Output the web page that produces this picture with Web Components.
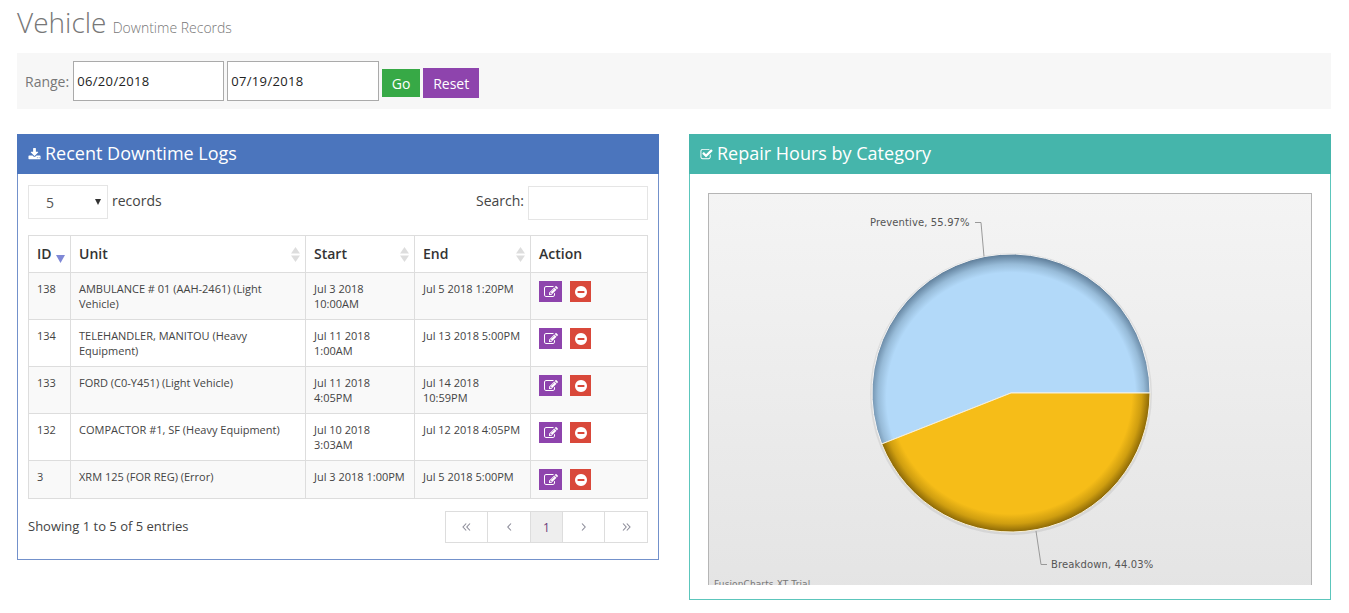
<!DOCTYPE html>
<html>
<head>
<meta charset="utf-8">
<title>Vehicle Downtime Records</title>
<style>
  body { margin: 0; background: #fff; font-family: "Open Sans", "Liberation Sans", sans-serif; color: #555; }
</style>
</head>
<body>
<vehicle-page></vehicle-page>

<script>
'use strict';

const ICONS = {
  download: 'M1344 1344q0-26-19-45t-45-19-45 19-19 45 19 45 45 19 45-19 19-45zm256 0q0-26-19-45t-45-19-45 19-19 45 19 45 45 19 45-19 19-45zm128-224v320q0 40-28 68t-68 28h-1472q-40 0-68-28t-28-68v-320q0-40 28-68t68-28h465l135 136q58 56 136 56t136-56l136-136h464q40 0 68 28t28 68zm-325-569q17 41-14 70l-448 448q-18 19-45 19t-45-19l-448-448q-31-29-14-70 17-39 59-39h256v-448q0-26 19-45t45-19h256q26 0 45 19t19 45v448h256q42 0 59 39z',
  check: 'M1472 930v318q0 119-84.5 203.5t-203.5 84.5h-832q-119 0-203.5-84.5t-84.5-203.5v-832q0-119 84.5-203.5t203.5-84.5h832q63 0 117 25 15 7 18 23 3 17-9 29l-49 49q-10 10-23 10-3 0-9-2-23-6-45-6h-832q-66 0-113 47t-47 113v832q0 66 47 113t113 47h832q66 0 113-47t47-113v-254q0-13 9-22l64-64q10-10 23-10 6 0 12 3 20 8 20 29zm231-489l-814 814q-24 24-57 24t-57-24l-430-430q-24-24-24-57t24-57l110-110q24-24 57-24t57 24l263 263 647-647q24-24 57-24t57 24l110 110q24 24 24 57t-24 57z',
  edit: 'M888 1184l116-116-152-152-116 116v56h96v96h56zm440-720q-16-16-33 1l-350 350q-17 17-1 33t33-1l350-350q17-17 1-33zm80 594v190q0 119-84.5 203.5t-203.5 84.5h-832q-119 0-203.5-84.5t-84.5-203.5v-832q0-119 84.5-203.5t203.5-84.5h832q63 0 117 25 15 7 18 23 3 17-9 29l-49 49q-14 14-32 8-23-6-45-6h-832q-66 0-113 47t-47 113v832q0 66 47 113t113 47h832q66 0 113-47t47-113v-126q0-13 9-22l64-64q15-15 35-7t20 29zm-96-738l288 288-672 672h-288v-288zm444 132l-92 92-288-288 92-92q28-28 68-28t68 28l152 152q28 28 28 68t-28 68z',
  minus: 'M1344 960v-128q0-26-19-45t-45-19h-768q-26 0-45 19t-19 45v128q0 26 19 45t45 19h768q26 0 45-19t19-45zm320-64q0 209-103 385.5t-279.5 279.5-385.5 103-385.5-103-279.5-279.5-103-385.5 103-385.5 279.5-279.5 385.5-103 385.5 103 279.5 279.5 103 385.5z',
};

function icon(name, size) {
  return `<svg width="${size}" height="${size}" viewBox="0 0 1792 1792" fill="currentColor" style="display:block"><path d="${ICONS[name]}"/></svg>`;
}

function chevrons(points) {
  return `<svg width="9" height="8" viewBox="0 0 9 8" fill="none" stroke="#8b8b98" stroke-width="1.1"><path d="${points}"/></svg>`;
}

class PageTitle extends HTMLElement {
  constructor() {
    super();
    this.attachShadow({ mode: 'open' });
    this.shadowRoot.innerHTML = `
      <style>
        :host { display: block; padding: 0 17px; height: 53px; }
        h1 { margin: 0; padding-top: 3px; font-size: 28px; line-height: 38px; font-weight: 300; color: #777; }
        small { font-size: 14px; font-weight: 300; color: #777; margin-left: -1px; }
      </style>
      <h1><slot></slot> <small><slot name="sub"></slot></small></h1>
    `;
  }
}

class RangeBar extends HTMLElement {
  constructor() {
    super();
    this.attachShadow({ mode: 'open' });
    this.shadowRoot.innerHTML = `
      <style>
        :host { display: flex; align-items: center; height: 56px; margin: 0 18px 0 17px; padding-left: 8px; background: #f7f7f7; font-size: 14px; color: #777; }
        input { box-sizing: border-box; width: 151px; height: 40px; border: 1px solid #aaa; padding: 0 3px; font: 13px "Open Sans", sans-serif; letter-spacing: 0.35px; color: #222; background: #fff; outline: 0; }
        .label { margin-right: 4px; }
        .end { width: 152px; margin-left: 3px; }
        button { border: 0; padding: 0; color: #fff; font: 14px "Open Sans", sans-serif; }
        .go { width: 38px; height: 28px; margin: 4px 0 0 3px; background: #37a946; }
        .reset { width: 56px; height: 30px; margin: 4px 0 0 3px; background: #8e44ad; }
      </style>
      <span class="label">Range:</span>
      <input value="06/20/2018">
      <input class="end" value="07/19/2018">
      <button class="go">Go</button>
      <button class="reset">Reset</button>
    `;
  }
}

class InfoPanel extends HTMLElement {
  constructor() {
    super();
    this.attachShadow({ mode: 'open' });
    const color = this.getAttribute('color');
    const border = this.getAttribute('border');
    this.shadowRoot.innerHTML = `
      <style>
        :host { display: block; box-sizing: border-box; border: 1px solid ${border}; border-top: 0; align-self: start; }
        header { display: flex; align-items: center; height: 40px; margin: 0 -1px; padding: 0 0 2px 11px; box-sizing: border-box; background: ${color}; color: #fff; font-size: 18px; }
        .ic { margin: 2px 4px 0 0; }
      </style>
      <header><span class="ic">${icon(this.getAttribute('icon'), 13)}</span>${this.getAttribute('heading')}</header>
      <slot></slot>
    `;
  }
}

const ROWS = [
  ['138', 'AMBULANCE # 01 (AAH-2461) (Light Vehicle)', 'Jul 3 2018 10:00AM', 'Jul 5 2018 1:20PM'],
  ['134', 'TELEHANDLER, MANITOU (Heavy Equipment)', 'Jul 11 2018 1:00AM', 'Jul 13 2018 5:00PM'],
  ['133', 'FORD (C0-Y451) (Light Vehicle)', 'Jul 11 2018 4:05PM', 'Jul 14 2018 10:59PM'],
  ['132', 'COMPACTOR #1, SF (Heavy Equipment)', 'Jul 10 2018 3:03AM', 'Jul 12 2018 4:05PM'],
  ['3', 'XRM 125 (FOR REG) (Error)', 'Jul 3 2018 1:00PM', 'Jul 5 2018 5:00PM'],
];

const SORT_BOTH = `<svg class="sort" width="9" height="15" viewBox="0 0 9 15"><path d="M4.5 0L9 6.5H0z" fill="#ddd"/><path d="M0 8.5h9L4.5 15z" fill="#ddd"/></svg>`;
const SORT_DESC = `<svg class="sort-id" width="9" height="8" viewBox="0 0 9 8"><path d="M0 0h9L4.5 8z" fill="#7f88d6"/></svg>`;

class RecordsTable extends HTMLElement {
  constructor() {
    super();
    this.attachShadow({ mode: 'open' });
    const body = ROWS.map((row) => `
      <tr>
        <td>${row[0]}</td><td>${row[1]}</td><td>${row[2]}</td><td>${row[3]}</td>
        <td><div class="actions">
          <span class="btn edit">${icon('edit', 14)}</span>
          <span class="btn del">${icon('minus', 14)}</span>
        </div></td>
      </tr>`).join('');
    this.shadowRoot.innerHTML = `
      <style>
        :host { display: block; padding: 11px 10px 16px; font-size: 13px; color: #444; }
        .top { display: flex; justify-content: space-between; height: 50px; font-size: 14px; }
        .len { display: flex; align-items: flex-start; }
        .select { box-sizing: border-box; display: flex; align-items: center; justify-content: space-between; width: 80px; height: 34px; padding: 0 6px 0 17px; border: 1px solid #e5e5e5; font-size: 14px; color: #555; }
        .len span.txt { margin: 6px 0 0 4px; }
        .search { display: flex; align-items: flex-start; }
        .search span { margin: 6px 4px 0 0; }
        .search input { box-sizing: border-box; width: 120px; height: 34px; margin-top: 1px; border: 1px solid #e5e5e5; outline: 0; }
        table { border-collapse: collapse; table-layout: fixed; width: 620px; }
        th, td { border: 1px solid #ddd; vertical-align: top; text-align: left; padding: 8px; }
        th { position: relative; height: 20px; font-size: 14px; line-height: 20px; font-weight: 600; color: #333; padding-bottom: 8px; }
        td { font-size: 11px; line-height: 15px; color: #444; }
        tbody tr:nth-child(odd) td { background: #f9f9f9; }
        .sort { position: absolute; right: 5px; top: 11px; }
        .sort-id { position: absolute; left: 27px; top: 19px; }
        .actions { display: flex; gap: 8px; }
        .btn { display: flex; align-items: center; justify-content: center; height: 21px; color: #fff; }
        .edit { width: 23px; background: #8e44ad; }
        .del { width: 21px; background: #d9483a; }
        .foot { display: flex; justify-content: space-between; align-items: flex-start; margin-top: 12px; }
        .foot .info { margin-top: 6px; }
        .pager { display: flex; border: 1px solid #ddd; height: 30px; }
        .pager span { display: flex; align-items: center; justify-content: center; box-sizing: border-box; height: 30px; border-left: 1px solid #ddd; font-size: 12px; color: #777; }
        .pager span:first-child { border-left: 0; }
        .pager .cur { background: #eee; color: #6b3b7a; }
      </style>
      <div class="top">
        <div class="len">
          <div class="select">5 <svg width="6" height="6" viewBox="0 0 6 6"><path d="M0 0h6L3 6z" fill="#333"/></svg></div>
          <span class="txt">records</span>
        </div>
        <div class="search"><span>Search:</span><input></div>
      </div>
      <table>
        <colgroup><col style="width:42px"><col style="width:235px"><col style="width:109px"><col style="width:116px"><col></colgroup>
        <thead><tr>
          <th>ID${SORT_DESC}</th><th>Unit${SORT_BOTH}</th><th>Start${SORT_BOTH}</th><th>End${SORT_BOTH}</th><th>Action</th>
        </tr></thead>
        <tbody>${body}</tbody>
      </table>
      <div class="foot">
        <span class="info">Showing 1 to 5 of 5 entries</span>
        <div class="pager">
          <span style="width:41px">${chevrons('M4.2 .5L1 4l3.2 3.5M8 .5L4.8 4 8 7.5')}</span>
          <span style="width:43px">${chevrons('M6 .5L2.8 4 6 7.5')}</span>
          <span class="cur" style="width:32px">1</span>
          <span style="width:42px">${chevrons('M3 .5L6.2 4 3 7.5')}</span>
          <span style="width:43px">${chevrons('M1 .5L4.2 4 1 7.5M4.8 .5L8 4 4.8 7.5')}</span>
        </div>
      </div>
    `;
  }
}

class PieChart extends HTMLElement {
  constructor() {
    super();
    this.attachShadow({ mode: 'open' });
    // chart-local coordinates: the box starts at 708,193 on the page
    const cx = 303, cy = 200, r = 139;
    const ex = cx - 129.3, ey = cy + 51;
    const blue = `M${cx} ${cy}L${cx + r} ${cy}A${r} ${r} 0 1 0 ${ex} ${ey}Z`;
    const gold = `M${cx} ${cy}L${cx + r} ${cy}A${r} ${r} 0 0 1 ${ex} ${ey}Z`;
    this.shadowRoot.innerHTML = `
      <style>
        :host { display: block; margin: 19px 18px 14px; height: 392px; overflow: hidden; }
        svg { display: block; }
        text { font-family: "DejaVu Sans", Verdana, sans-serif; font-size: 10px; letter-spacing: 0.12px; fill: #555; }
      </style>
      <svg width="604" height="392" viewBox="0 0 604 392">
        <defs>
          <linearGradient id="bg" x1="0" y1="0" x2="0" y2="1">
            <stop offset="0" stop-color="#f4f4f4"/><stop offset="1" stop-color="#e4e4e4"/>
          </linearGradient>
          <radialGradient id="fb" gradientUnits="userSpaceOnUse" cx="${cx}" cy="${cy + 4}" r="${r + 4}">
            <stop offset="0.87" stop-color="#b2d9f9"/><stop offset="0.93" stop-color="#97bbd8"/><stop offset="0.98" stop-color="#6c8ca8"/><stop offset="1" stop-color="#5b7a96"/>
          </radialGradient>
          <radialGradient id="fg" gradientUnits="userSpaceOnUse" cx="${cx}" cy="${cy}" r="${r}">
            <stop offset="0.87" stop-color="#f6bd18"/><stop offset="0.94" stop-color="#cf9e10"/><stop offset="1" stop-color="#8a6706"/>
          </radialGradient>
        </defs>
        <rect x="0.5" y="0.5" width="603" height="400" fill="url(#bg)" stroke="#b5b5b5"/>
        <circle cx="${cx}" cy="${cy + 1}" r="${r + 2}" fill="#000" opacity="0.07"/>
        <path d="${blue}" fill="url(#fb)" stroke="#f4f4f4" stroke-width="1"/>
        <path d="${gold}" fill="url(#fg)" stroke="#f8f0d8" stroke-width="1"/>
        <path d="M267 29.5h6l3 34" fill="none" stroke="#999"/>
        <path d="M328 338l5 33.5h6" fill="none" stroke="#999"/>
        <text x="162" y="33">Preventive, 55.97%</text>
        <text x="343" y="375">Breakdown, 44.03%</text>
        <text x="6" y="394" style="font-size:9px;fill:#777">FusionCharts XT Trial</text>
      </svg>
    `;
  }
}

class VehiclePage extends HTMLElement {
  constructor() {
    super();
    this.attachShadow({ mode: 'open' });
    this.shadowRoot.innerHTML = `
      <style>
        :host { display: block; }
        .panels { display: grid; grid-template-columns: 642px 642px; gap: 30px; margin: 25px 17px 0; }
      </style>
      <page-title>Vehicle<span slot="sub">Downtime Records</span></page-title>
      <range-bar></range-bar>
      <div class="panels">
        <info-panel heading="Recent Downtime Logs" icon="download" color="#4b75bd" border="#7391cb"><records-table></records-table></info-panel>
        <info-panel heading="Repair Hours by Category" icon="check" color="#45b5ab" border="#5cc6bc"><pie-chart></pie-chart></info-panel>
      </div>
    `;
  }
}

customElements.define('page-title', PageTitle);
customElements.define('range-bar', RangeBar);
customElements.define('info-panel', InfoPanel);
customElements.define('records-table', RecordsTable);
customElements.define('pie-chart', PieChart);
customElements.define('vehicle-page', VehiclePage);
</script>
</body>
</html>
